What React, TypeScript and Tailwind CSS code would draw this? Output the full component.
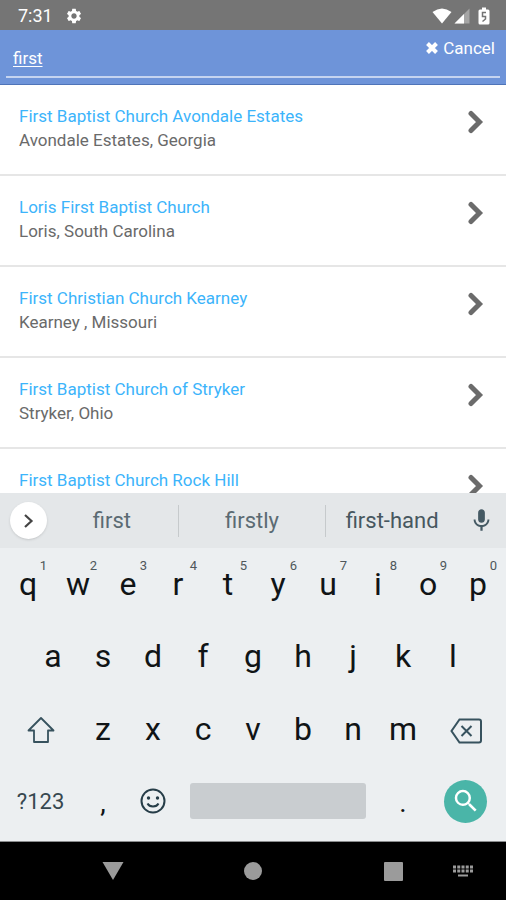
import { MdMic, MdSearch, MdSettings } from "react-icons/md";

const churches = [
  { name: "First Baptist Church Avondale Estates", place: "Avondale Estates, Georgia" },
  { name: "Loris First Baptist Church", place: "Loris, South Carolina" },
  { name: "First Christian Church Kearney", place: "Kearney , Missouri" },
  { name: "First Baptist Church of Stryker", place: "Stryker, Ohio" },
  { name: "First Baptist Church Rock Hill", place: "" },
];

const topRow = ["q", "w", "e", "r", "t", "y", "u", "i", "o", "p"];
const middleRow = ["a", "s", "d", "f", "g", "h", "j", "k", "l"];
const bottomRow = ["z", "x", "c", "v", "b", "n", "m"];

const StatusBar = () => {
  return (
    <div className="flex h-[30px] shrink-0 items-center justify-between bg-[#757575] pl-[18px] pr-4 pt-0.5 text-white">
      <div className="flex items-center gap-3">
        <span className="text-[18px] leading-6">7:31</span>
        <MdSettings className="size-[18px]" />
      </div>
      <div className="flex items-center">
        <svg viewBox="0 0 20 16" className="h-4 w-5" fill="currentColor">
          <path d="M0.5 4 Q10 -3 19.5 4 L10 15.5 Z" />
        </svg>
        <svg viewBox="0 0 16 16" className="ml-0.5 h-4 w-4" fill="currentColor">
          <path d="M15.500 0.500 V15.500 H0.500 Z" opacity="0.35" />
          <path d="M10 6 V15.500 H0.500 Z" />
        </svg>
        <svg viewBox="0 0 12 18" className="ml-2 h-[18px] w-3" fill="currentColor">
          <path d="M4 0.500 H8 V2.500 H10 Q11.500 2.500 11.500 4 V16 Q11.500 17.500 10 17.500 H2 Q0.500 17.500 0.500 16 V4 Q0.500 2.500 2 2.500 H4 Z" />
          <path d="M8 5.500 H4.500 V9.500 H7.500 V12 L4.500 14.500" fill="none" stroke="#757575" strokeWidth="1.500" />
        </svg>
      </div>
    </div>
  );
};

const SearchHeader = () => {
  return (
    <header className="shrink-0 border-b border-[#4f74b8] bg-[#6e94d9] px-1.5 pb-1.5 text-white">
      <div className="flex h-12 items-start border-b-2 border-[#c5d4f0]">
        <input
          type="text"
          aria-label="Search churches"
          defaultValue="first"
          className="mt-4 h-6 min-w-0 flex-1 bg-transparent pl-[7px] text-[17px] leading-6 underline decoration-1 underline-offset-2 outline-none"
        />
        <button className="mr-[5px] mt-1.5 flex h-6 items-center gap-1 text-[17px] leading-6">
          <svg viewBox="0 0 14 14" className="size-3.5" stroke="currentColor" strokeWidth="4">
            <path d="M2.500 2.500 L11.500 11.500 M11.500 2.500 L2.500 11.500" />
          </svg>
          Cancel
        </button>
      </div>
    </header>
  );
};

const ChurchList = () => {
  return (
    <ul className="min-h-0 flex-1 overflow-hidden bg-white">
      {churches.map((church) => (
        <li key={church.name} className="border-b-2 border-[#e6e6e6]">
          <a href="#" className="flex items-start justify-between pb-[22px] pl-[19px] pr-[22px] pt-[19px]">
            <div className="text-[17px] leading-6">
              <div className="text-[#3cb4fb]">{church.name}</div>
              {church.place && <div className="text-[#6a6a6a]">{church.place}</div>}
            </div>
            <svg viewBox="0 0 16 24" className="mt-1.5 h-6 w-4 text-[#6b6b6b]" fill="none" stroke="currentColor" strokeWidth="5">
              <path d="M3 3.500 L11.500 12 L3 20.500" strokeLinecap="round" />
            </svg>
          </a>
        </li>
      ))}
    </ul>
  );
};

const Suggestions = () => {
  return (
    <div className="flex h-[55px] items-center bg-[#e4e7e9] text-[22px] leading-8 text-[#5b6b73]">
      <div className="w-[46px] shrink-0 pl-2.5">
        <button
          aria-label="More options"
          className="flex size-[37px] items-center justify-center rounded-full bg-white text-[#444444] shadow"
        >
          <svg viewBox="0 0 12 16" className="h-4 w-3" fill="none" stroke="currentColor" strokeWidth="2.200">
            <path d="M2 2 L8.500 8 L2 14" />
          </svg>
        </button>
      </div>
      <button className="h-8 flex-[9] border-r border-[#c6cacc]">first</button>
      <button className="h-8 flex-[10] border-r border-[#c6cacc]">firstly</button>
      <button className="h-8 flex-[9] text-[#47575f]">first-hand</button>
      <button aria-label="Voice input" className="flex w-12 shrink-0 justify-center text-[#455a64]">
        <MdMic className="size-[27px]" />
      </button>
    </div>
  );
};

const Keyboard = () => {
  return (
    <div className="shrink-0 border-b border-[#8a8c8d] bg-[#eceff1] text-[#101416]">
      <Suggestions />
      <div className="px-[3px] pb-[5px] text-[32px]">
        <div className="grid h-[72px] grid-cols-10">
          {topRow.map((letter, i) => (
            <button key={letter} className="relative">
              {letter}
              <span className="absolute right-1.5 top-2.5 text-[13px] leading-4 text-[#4f575b]">{(i + 1) % 10}</span>
            </button>
          ))}
        </div>

        <div className="grid h-[72px] grid-cols-9 px-[25px]">
          {middleRow.map((letter) => (
            <button key={letter}>{letter}</button>
          ))}
        </div>

        {/* Shift, letters, backspace */}
        <div className="grid h-[74px] grid-cols-20">
          <button aria-label="Shift" className="col-span-3 flex items-center justify-center pt-0.5 text-[#37525e]">
            <svg viewBox="0 0 28 28" className="size-7" fill="none" stroke="currentColor" strokeWidth="1.800">
              <path d="M14 2 L26.500 14.500 H21 V26 H7 V14.500 H1.500 Z" strokeLinejoin="round" />
            </svg>
          </button>
          {bottomRow.map((letter) => (
            <button key={letter} className="col-span-2">
              {letter}
            </button>
          ))}
          <button aria-label="Backspace" className="col-span-3 flex items-center justify-center pt-1 text-[#37525e]">
            <svg viewBox="0 0 32 26" className="h-[26px] w-8" fill="none" stroke="currentColor" strokeWidth="2">
              <path d="M9.500 1.500 H29 Q31 1.500 31 3.500 V22.500 Q31 24.500 29 24.500 H9.500 L1.500 13 Z" />
              <path d="M11.500 8 L21.500 18 M21.500 8 L11.500 18" />
            </svg>
          </button>
        </div>

        {/* Symbols, space, search */}
        <div className="grid h-[70px] grid-cols-20">
          <button className="col-span-3 text-[22px] text-[#37474f]">?123</button>
          <button className="col-span-2 pt-1 text-[28px]">,</button>
          <button aria-label="Emoji" className="col-span-2 flex items-center justify-center text-[#263d48]">
            <svg viewBox="0 0 26 26" className="size-[26px]" fill="none" stroke="currentColor" strokeWidth="2">
              <circle cx="13" cy="13" r="11.500" />
              <path d="M7.500 15.500 Q9 18.500 13 18.500 T18.500 15.500" />
              <circle cx="8.500" cy="10" r="1.700" fill="currentColor" stroke="none" />
              <circle cx="17.500" cy="10" r="1.700" fill="currentColor" stroke="none" />
            </svg>
          </button>
          <button aria-label="Space" className="col-span-8 mx-3 h-9 self-center rounded-[3px] bg-[#c9cdd0]" />
          <button className="col-span-2 pt-1 text-[28px]">.</button>
          <div className="col-span-3 flex items-center justify-center">
            <button
              aria-label="Search"
              className="flex size-[43px] items-center justify-center rounded-full bg-[#4ab5a8] text-white"
            >
              <MdSearch className="size-[30px]" />
            </button>
          </div>
        </div>
      </div>
    </div>
  );
};

const NavigationBar = () => {
  return (
    <nav className="grid h-[58px] shrink-0 grid-cols-[1fr_3fr_1fr_1fr] bg-black pl-[78px] pr-2 text-[#9b9b9b]">
      <button aria-label="Back" className="flex items-center justify-center">
        <svg viewBox="0 0 22 18" className="h-[18px] w-[22px]" fill="currentColor">
          <path d="M0.500 0 H21.500 L11 18 Z" />
        </svg>
      </button>
      <button aria-label="Home" className="flex items-center justify-center">
        <span className="size-[18px] rounded-full bg-[#9b9b9b]" />
      </button>
      <button aria-label="Recent apps" className="flex items-center justify-center">
        <span className="size-[19px] rounded-[1px] bg-[#9b9b9b]" />
      </button>
      <button aria-label="Switch keyboard" className="flex items-center justify-center">
        <svg viewBox="0 0 20 12" className="h-3 w-5" stroke="currentColor" strokeWidth="3">
          <path d="M0 2 H20 M0 6 H20" strokeDasharray="3 1.250" />
          <path d="M5 10.500 H15" strokeWidth="2" />
        </svg>
      </button>
    </nav>
  );
};

export default function App() {
  return (
    <div className="flex h-screen flex-col overflow-hidden font-[Roboto,sans-serif]">
      <StatusBar />
      <SearchHeader />
      <ChurchList />
      <Keyboard />
      <NavigationBar />
    </div>
  );
}
